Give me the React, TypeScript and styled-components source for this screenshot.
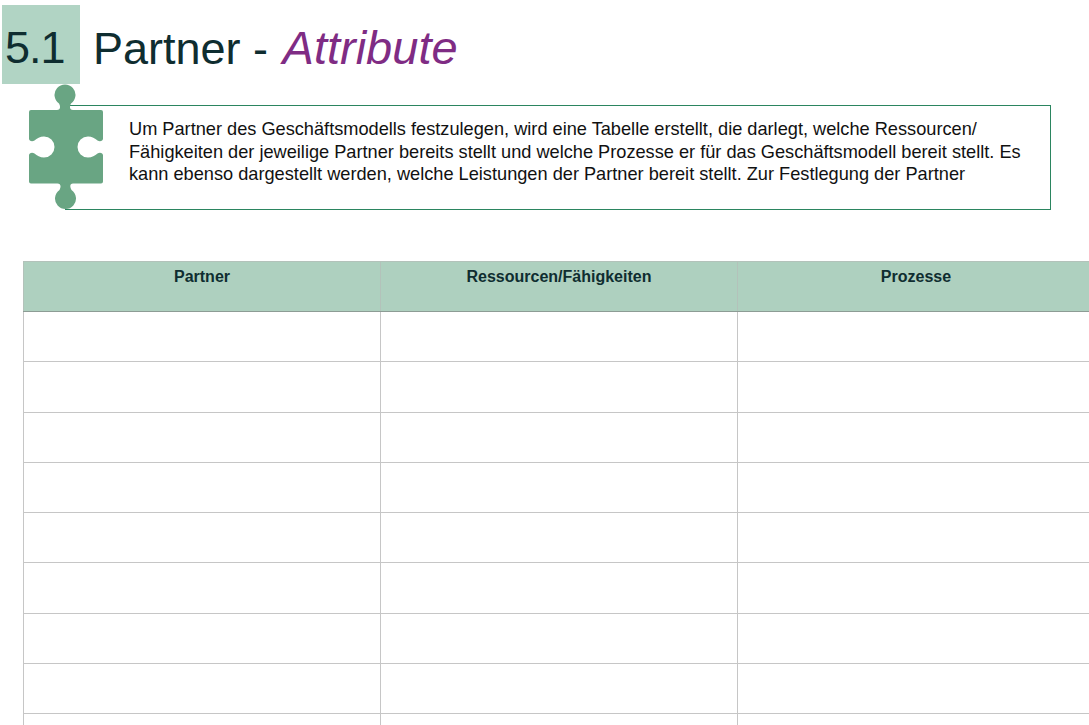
import React from 'react'
import styled, { createGlobalStyle } from 'styled-components'

const GlobalStyle = createGlobalStyle`
  html, body {
    margin: 0;
    width: 1089px;
    height: 725px;
    overflow: hidden;
    background: #fff;
    font-family: "Liberation Sans", Arial, sans-serif;
  }
`

const Page = styled.main`
  padding: 5px 0 0 2px;
`

const Heading = styled.header`
  display: flex;
  align-items: flex-start;
  gap: 13px;
  height: 79px;
`

const SectionNumber = styled.div`
  box-sizing: border-box;
  width: 78px;
  height: 79px;
  padding-left: 3px;
  background: #b1d4c4;
  color: #0f2d30;
  font-size: 45px;
  letter-spacing: -1px;
  line-height: 85px;
`

const Title = styled.h1`
  margin: 0;
  color: #0f2d30;
  font-size: 45px;
  font-weight: 400;
  line-height: 85px;
`

const Accent = styled.em`
  margin-left: 2px;
  color: #7f2c84;
  font-size: 47px;
`

const Callout = styled.section`
  position: relative;
  box-sizing: border-box;
  width: 986px;
  height: 105px;
  margin: 21px 0 0 63px;
  padding: 12px 20px 0 63px;
  border: 1px solid #2b8560;
  color: #111;
  font-size: 18.2px;
  line-height: 22.5px;
  white-space: nowrap;
`

const Puzzle = styled.svg`
  position: absolute;
  left: -38px;
  top: -22px;
  width: 76px;
  height: 128px;
`

const Sheet = styled.table`
  table-layout: fixed;
  width: 1072px;
  height: 464px;
  margin: 51px 0 0 21px;
  border-collapse: collapse;
`

const HeadCell = styled.th`
  box-sizing: border-box;
  height: 50px;
  padding: 6px 0 0;
  vertical-align: top;
  background: #aed0bf;
  border: 1px solid #b3c2ba;
  border-bottom-color: #8d9c95;
  color: #0f2d30;
  font-size: 16px;
  font-weight: 700;
  line-height: 18px;
`

const Cell = styled.td`
  box-sizing: border-box;
  height: 50.3px;
  padding: 0;
  border: 1px solid #c6c6c6;
`

const columns = ['Partner', 'Ressourcen/Fähigkeiten', 'Prozesse']
const rows = [0, 1, 2, 3, 4, 5, 6, 7, 8]

function PuzzlePiece () {
  return (
    <Puzzle viewBox='28 84 76 128' aria-hidden='true'>
      <path
        fill='#69a583'
        d='M31 110 H57 C60 110 61 107 59 103.5 A10.5 10.5 0 1 1 71 103.5 C69 107 70 110 73 110
           H101 Q103 110 103 112 V138.5 C103 141 100 142 97.5 140.5 C95 138.5 92 136.5 88 136.5
           A10.5 10.5 0 0 0 88 157.5 C92 157.5 95 155.5 97.5 153.5 C100 152 103 153 103 155.5
           V181.5 Q103 183.5 101 183.5 H73 C70 183.5 69.5 186.5 71.5 190
           A10.5 10.5 0 1 1 59.5 190 C61.5 186.5 60.5 183.5 57.5 183.5
           H31 Q29 183.5 29 181.5 V155.5 C29 153 32 152 34.5 153.5 C37 155.5 40 157.5 44 157.5
           A10.5 10.5 0 0 0 44 136.5 C40 136.5 37 138.5 34.5 140.5 C32 142 29 141 29 138.5
           V112 Q29 110 31 110 Z'
      />
    </Puzzle>
  )
}

function App () {
  return (
    <Page>
      <GlobalStyle />
      <Heading>
        <SectionNumber>5.1</SectionNumber>
        <Title>
          Partner - <Accent>Attribute</Accent>
        </Title>
      </Heading>
      <Callout>
        <PuzzlePiece />
        Um Partner des Geschäftsmodells festzulegen, wird eine Tabelle erstellt, die darlegt, welche Ressourcen/
        <br />
        Fähigkeiten der jeweilige Partner bereits stellt und welche Prozesse er für das Geschäftsmodell bereit stellt. Es
        <br />
        kann ebenso dargestellt werden, welche Leistungen der Partner bereit stellt. Zur Festlegung der Partner
      </Callout>
      <Sheet>
        <thead>
          <tr>
            {columns.map(name => (
              <HeadCell key={name}>{name}</HeadCell>
            ))}
          </tr>
        </thead>
        <tbody>
          {rows.map(row => (
            <tr key={row}>
              {columns.map(name => (
                <Cell key={name} />
              ))}
            </tr>
          ))}
        </tbody>
      </Sheet>
    </Page>
  )
}

export default App
